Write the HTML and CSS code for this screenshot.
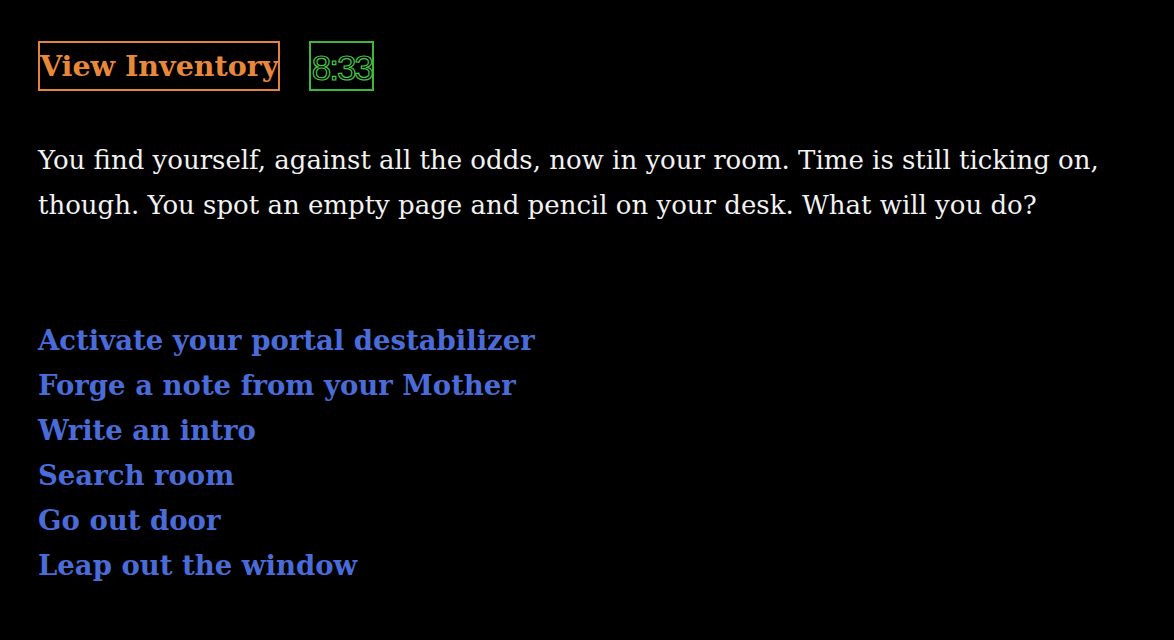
FILE: index.html
```html
<!DOCTYPE html>
<html>
<head>
<meta charset="utf-8">
<link rel="stylesheet" href="styles.css">
</head>
<body>
<div class="page">
  <div class="header">
    <button class="inv">View Inventory</button>
    <div class="timer">8:33</div>
  </div>
  <p class="story">You find yourself, against all the odds, now in your room. Time is still ticking on, though. You spot an empty page and pencil on your desk. What will you do?</p>
  <ul class="choices">
    <li><a href="#">Activate your portal destabilizer</a></li>
    <li><a href="#">Forge a note from your Mother</a></li>
    <li><a href="#">Write an intro</a></li>
    <li><a href="#">Search room</a></li>
    <li><a href="#">Go out door</a></li>
    <li><a href="#">Leap out the window</a></li>
  </ul>
</div>
</body>
</html>
```
FILE: styles.css
```css
html, body {
  margin: 0;
  background: #000;
}
.page {
  padding: 41px 38px 0 38px;
  font-family: "DejaVu Serif", "Liberation Serif", serif;
}
.header {
  display: flex;
  gap: 29px;
  align-items: flex-start;
}
.inv {
  box-sizing: border-box;
  height: 50px;
  padding: 0;
  background: #000;
  border: 2px solid #e2843d;
  color: #e8883a;
  font-family: inherit;
  font-weight: bold;
  font-size: 28.5px;
  line-height: 46px;
}
.timer {
  box-sizing: border-box;
  width: 65px;
  height: 50px;
  padding: 0;
  border: 2px solid #3cb83c;
  color: transparent;
  -webkit-text-stroke: 1.2px #46c646;
  font-family: "Liberation Sans", sans-serif;
  font-size: 35px;
  line-height: 50px;
  letter-spacing: -2px;
  text-align: center;
  white-space: nowrap;
}
.story {
  margin: 47px 0 0 0;
  color: #f2f2f2;
  font-size: 26px;
  line-height: 45px;
}
.choices {
  list-style: none;
  margin: 90px 0 0 0;
  padding: 0;
  font-size: 27.5px;
  line-height: 45px;
  font-weight: bold;
}
.choices a {
  color: #4a6cd8;
  text-decoration: none;
}
```
